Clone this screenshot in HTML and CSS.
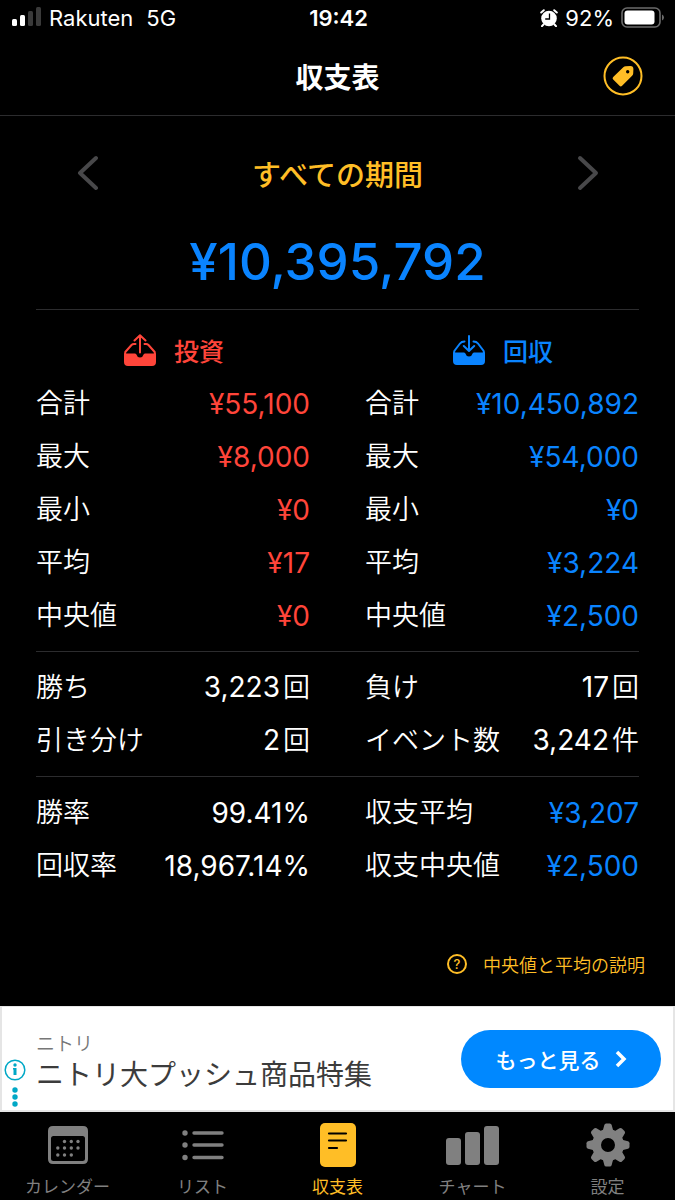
FILE: index.html
```html
<!DOCTYPE html>
<html lang="ja">
<head>
    <meta charset="UTF-8">
    <meta name="viewport" content="width=device-width, initial-scale=1.0">
    <title>収支表</title>
    <link rel="stylesheet" href="styles.css">
</head>
<body>
    <div class="status-bar">
        <div class="status-left">
            <svg class="signal" width="30" height="20" viewBox="0 0 30 20" aria-hidden="true">
                <rect x="0" y="12" width="5" height="7" rx="1.5" fill="#fff"/>
                <rect x="8" y="8" width="5" height="11" rx="1.5" fill="#fff"/>
                <rect x="16" y="4" width="5" height="15" rx="1.5" fill="#3a3a3a"/>
                <rect x="24" y="0" width="5" height="19" rx="1.5" fill="#3a3a3a"/>
            </svg>
            <span class="carrier">Rakuten</span>
            <span>5G</span>
        </div>
        <span class="clock">19:42</span>
        <div class="status-right">
            <svg width="18" height="18" viewBox="0 0 18 18" aria-hidden="true">
                <circle cx="9" cy="9.5" r="7.8" fill="#fff"/>
                <path d="M1.200 3.500 3.800 1.200M16.800 3.500l-2.600-2.300M3.500 15.500 2 17.200M14.500 15.500l1.500 1.700" stroke="#fff" stroke-width="2" stroke-linecap="round"/>
                <path d="M9.500 4.500v5.500H5.200" fill="none" stroke="#000" stroke-width="1.300"/>
            </svg>
            <span>92%</span>
            <svg class="battery" width="44" height="22" viewBox="0 0 44 22" aria-hidden="true">
                <rect x="1" y="1" width="38" height="19" rx="5" fill="none" stroke="#6b6b6b" stroke-width="1.600"/>
                <rect x="3.500" y="3.500" width="30" height="14" rx="3" fill="#fff"/>
                <path d="M41 7.500q2 .8 2 3t-2 3z" fill="#6b6b6b"/>
            </svg>
        </div>
    </div>

    <header class="nav-bar">
        <h1>収支表</h1>
        <button class="tag-button" type="button" aria-label="タグ">
            <svg width="40" height="40" viewBox="0 0 40 40">
                <circle cx="20" cy="20" r="18.500" fill="none" stroke="#ffbe26" stroke-width="2"/>
                <path fill="#ffbe26" fill-rule="evenodd" d="M20.300 11.300q1-1 2.400-1.100l4.800-.2q2.900 0 2.900 2.900l-.2 4.500q-.1 1.400-1.100 2.400l-10 10q-1.300 1.300-2.600 0l-6.300-6.300q-1.300-1.300 0-2.600zM24.700 14a1.700 1.700 0 1 0 0 3.400 1.700 1.700 0 0 0 0-3.400z"/>
            </svg>
        </button>
    </header>

    <main>
        <div class="period">
            <button class="arrow" type="button" aria-label="前の期間">
                <svg width="22" height="36" viewBox="0 0 22 36"><path d="M20 3 4 18l16 15"/></svg>
            </button>
            <h2>すべての期間</h2>
            <button class="arrow" type="button" aria-label="次の期間">
                <svg width="22" height="36" viewBox="0 0 22 36"><path d="M3 3l16 15L3 33"/></svg>
            </button>
        </div>

        <p class="total">¥10,395,792</p>

        <section class="group first">
            <div class="column">
                <h3 class="red">
                    <svg width="32" height="32" viewBox="0 0 32 32" aria-hidden="true">
                        <path fill="currentColor" d="M0 19.500h11q1.300 0 1.700 1.500a3.400 3.400 0 0 0 6.600 0q.4-1.500 1.700-1.500h11V28q0 4-4 4H4q-4 0-4-4z"/>
                        <path fill="none" stroke="currentColor" stroke-width="2" stroke-linecap="round" stroke-linejoin="round" d="M1 20.500 1.300 18 7.500 11q1-1 2.500-1h1.500M31 20.500l-.3-2.500-6.200-7q-1-1-2.500-1h-1.500M16 18.500V2M10.500 6.500 16 1.300l5.500 5.200"/>
                    </svg>
                    投資
                </h3>
                <table>
                    <tr><th scope="row">合計</th><td class="red">¥55,100</td></tr>
                    <tr><th scope="row">最大</th><td class="red">¥8,000</td></tr>
                    <tr><th scope="row">最小</th><td class="red">¥0</td></tr>
                    <tr><th scope="row">平均</th><td class="red">¥17</td></tr>
                    <tr><th scope="row">中央値</th><td class="red">¥0</td></tr>
                </table>
            </div>
            <div class="column">
                <h3 class="blue">
                    <svg width="32" height="32" viewBox="0 0 32 32" aria-hidden="true">
                        <path fill="currentColor" d="M0 18.500h11q1.300 0 1.700 1.500a3.400 3.400 0 0 0 6.600 0q.4-1.500 1.700-1.500h11V27q0 4-4 4H4q-4 0-4-4z"/>
                        <path fill="none" stroke="currentColor" stroke-width="2" stroke-linecap="round" stroke-linejoin="round" d="M1 19.500 1.300 17 7 9.500q1.500-2 4.500-2M31 19.500l-.3-2.500L25 9.500q-1.500-2-4.500-2M16 2v14M10.800 12l5.200 5 5.200-5"/>
                    </svg>
                    回収
                </h3>
                <table>
                    <tr><th scope="row">合計</th><td class="blue">¥10,450,892</td></tr>
                    <tr><th scope="row">最大</th><td class="blue">¥54,000</td></tr>
                    <tr><th scope="row">最小</th><td class="blue">¥0</td></tr>
                    <tr><th scope="row">平均</th><td class="blue">¥3,224</td></tr>
                    <tr><th scope="row">中央値</th><td class="blue">¥2,500</td></tr>
                </table>
            </div>
        </section>

        <section class="group">
            <table>
                <tr><th scope="row">勝ち</th><td>3,223<span class="unit">回</span></td></tr>
                <tr><th scope="row">引き分け</th><td>2<span class="unit">回</span></td></tr>
            </table>
            <table>
                <tr><th scope="row">負け</th><td>17<span class="unit">回</span></td></tr>
                <tr><th scope="row">イベント数</th><td>3,242<span class="unit">件</span></td></tr>
            </table>
        </section>

        <section class="group">
            <table>
                <tr><th scope="row">勝率</th><td>99.41%</td></tr>
                <tr><th scope="row">回収率</th><td>18,967.14%</td></tr>
            </table>
            <table>
                <tr><th scope="row">収支平均</th><td class="blue">¥3,207</td></tr>
                <tr><th scope="row">収支中央値</th><td class="blue">¥2,500</td></tr>
            </table>
        </section>

        <a class="help" href="#">
            <span class="help-icon">?</span>
            中央値と平均の説明
        </a>
    </main>

    <aside class="ad">
        <div class="ad-mark">
            <svg width="22" height="50" viewBox="0 0 22 50" aria-hidden="true">
                <circle cx="11" cy="12" r="9.800" fill="none" stroke="#00a8c6" stroke-width="1.500"/>
                <circle cx="11" cy="7" r="1.700" fill="#00a8c6"/>
                <path d="M9 10h3.500v7H9.500v-5.500H9z" fill="#00a8c6"/>
                <circle cx="11" cy="32" r="2.700" fill="#00a8c6"/>
                <circle cx="11" cy="39" r="2.700" fill="#00a8c6"/>
                <circle cx="11" cy="46" r="2.700" fill="#00a8c6"/>
            </svg>
        </div>
        <div class="ad-text">
            <p class="ad-brand">ニトリ</p>
            <p class="ad-title">ニトリ大プッシュ商品特集</p>
        </div>
        <a class="ad-link" href="#">
            もっと見る
            <svg width="12" height="18" viewBox="0 0 12 18" aria-hidden="true"><path d="M2 2l7 7-7 7" fill="none" stroke="#fff" stroke-width="3.500"/></svg>
        </a>
    </aside>

    <nav class="tab-bar">
        <a href="#">
            <svg width="44" height="44" viewBox="0 0 44 44" aria-hidden="true">
                <path fill="currentColor" fill-rule="evenodd" d="M7 3h30q5 0 5 5v28q0 5-5 5H7q-5 0-5-5V8q0-5 5-5zM7.500 13Q5 13 5 15.500v20Q5 38 7.500 38h29q2.500 0 2.500-2.500v-20q0-2.500-2.500-2.500z"/>
                <g fill="currentColor">
                    <circle cx="18.500" cy="18.500" r="1.700"/><circle cx="25.300" cy="18.500" r="1.700"/><circle cx="32" cy="18.500" r="1.700"/>
                    <circle cx="11.800" cy="25" r="1.700"/><circle cx="18.500" cy="25" r="1.700"/><circle cx="25.300" cy="25" r="1.700"/><circle cx="32" cy="25" r="1.700"/>
                    <circle cx="11.800" cy="32" r="1.700"/><circle cx="18.500" cy="32" r="1.700"/><circle cx="25.300" cy="32" r="1.700"/>
                </g>
            </svg>
            カレンダー
        </a>
        <a href="#">
            <svg width="44" height="44" viewBox="0 0 44 44" aria-hidden="true">
                <g fill="currentColor"><circle cx="4" cy="10" r="2.700"/><circle cx="4" cy="22" r="2.700"/><circle cx="4" cy="34.500" r="2.700"/></g>
                <path d="M13 10h28M13 22h28M13 34.500h28" stroke="currentColor" stroke-width="3.400" stroke-linecap="round"/>
            </svg>
            リスト
        </a>
        <a class="active" href="#">
            <svg width="44" height="44" viewBox="0 0 44 44" aria-hidden="true">
                <rect x="4" y="0" width="36" height="44" rx="5" fill="currentColor"/>
                <path d="M13 10.500h17M13 17.500h17M13 25h8" stroke="#000" stroke-width="2.200" stroke-linecap="round"/>
            </svg>
            収支表
        </a>
        <a href="#">
            <svg width="54" height="44" viewBox="0 0 54 44" aria-hidden="true">
                <g fill="currentColor"><rect x="0" y="15" width="15" height="27" rx="3"/><rect x="19" y="9" width="15" height="33" rx="3"/><rect x="38" y="3" width="15" height="39" rx="3"/></g>
            </svg>
            チャート
        </a>
        <a href="#">
            <svg width="44" height="44" viewBox="0 0 44 44" aria-hidden="true">
                <g fill="currentColor">
                    <path id="tooth" d="M16.500 9 18.300 2Q18.700.500 20.200.500h3.600Q25.300.500 25.700 2l1.800 7z"/>
                    <use href="#tooth" transform="rotate(45 22 22)"/>
                    <use href="#tooth" transform="rotate(90 22 22)"/>
                    <use href="#tooth" transform="rotate(135 22 22)"/>
                    <use href="#tooth" transform="rotate(180 22 22)"/>
                    <use href="#tooth" transform="rotate(225 22 22)"/>
                    <use href="#tooth" transform="rotate(270 22 22)"/>
                    <use href="#tooth" transform="rotate(315 22 22)"/>
                </g>
                <circle cx="22" cy="22" r="11.500" fill="none" stroke="currentColor" stroke-width="9"/>
            </svg>
            設定
        </a>
    </nav>
</body>
</html>
```
FILE: styles.css
```css
* {
    margin: 0;
    padding: 0;
    box-sizing: border-box;
}

body {
    display: flex;
    flex-direction: column;
    min-height: 100vh;
    background-color: #000;
    color: #fff;
    font-family: Inter, 'Noto Sans CJK JP', sans-serif;
}

a {
    text-decoration: none;
}

button {
    background: none;
    border: none;
    cursor: pointer;
}

svg {
    display: block;
    flex-shrink: 0;
}

.red {
    color: #ff453a;
}

.blue {
    color: #0a84ff;
}

/* Phone status bar */
.status-bar {
    display: grid;
    grid-template-columns: 1fr auto 1fr;
    align-items: center;
    height: 36px;
    padding: 0 10px 0 12px;
    font-size: 22px;
}

.status-left,
.status-right {
    display: flex;
    align-items: center;
    gap: 7px;
}

.signal {
    margin-bottom: 2px;
}

.carrier {
    margin-right: 6px;
}

.status-right {
    justify-content: flex-end;
}

.clock {
    font-weight: 600;
}

/* Title bar */
.nav-bar {
    display: grid;
    grid-template-columns: 1fr auto 1fr;
    align-items: center;
    height: 80px;
    padding: 0 32px;
    border-bottom: 1px solid #2c2c2e;
}

.nav-bar h1 {
    grid-column: 2;
    font-size: 28px;
    font-weight: 700;
}

.tag-button {
    justify-self: end;
}

main {
    flex: 1;
    padding: 0 36px;
}

.period {
    display: flex;
    justify-content: space-between;
    align-items: center;
    height: 114px;
    padding: 0 40px;
}

.period h2 {
    color: #ffbe26;
    font-size: 29px;
    font-weight: 500;
}

.arrow path {
    fill: none;
    stroke: #48484a;
    stroke-width: 4;
    stroke-linecap: round;
    stroke-linejoin: round;
}

.total {
    height: 79px;
    color: #0a84ff;
    font-size: 51px;
    font-weight: 500;
    line-height: 64px;
    text-align: center;
}

/* Two column figures */
.group {
    display: grid;
    grid-template-columns: 1fr 1fr;
    gap: 55px;
    padding: 9px 0;
    border-top: 1px solid #2c2c2e;
}

.group.first {
    padding-top: 15px;
}

.group h3 {
    display: flex;
    justify-content: center;
    align-items: center;
    gap: 18px;
    height: 52px;
    padding: 0 0 2px 2px;
    font-size: 25px;
    font-weight: 500;
}

.group table {
    width: 100%;
    border-collapse: collapse;
    font-size: 28px;
    white-space: nowrap;
}

.group tr {
    height: 53px;
    line-height: 40px;
}

.group th {
    font-size: 27px;
    font-weight: 350;
    text-align: left;
}

.group td {
    text-align: right;
}

.unit {
    margin-left: 3px;
    font-size: 27px;
    font-weight: 350;
}

.help {
    display: flex;
    justify-content: flex-end;
    align-items: center;
    gap: 16px;
    margin: 50px -6px 0 0;
    color: #ffbe26;
    font-size: 18px;
    font-weight: 350;
}

.help-icon {
    width: 20px;
    height: 20px;
    border: 2px solid #ffbe26;
    border-radius: 50%;
    font-size: 13px;
    font-weight: 500;
    line-height: 16px;
    text-align: center;
}

/* Ad banner */
.ad {
    display: flex;
    align-items: center;
    height: 106px;
    padding-right: 12px;
    background-color: #fff;
    border: 2px solid #e5e5e5;
    border-top-width: 1px;
}

.ad-mark {
    align-self: flex-end;
    width: 34px;
    padding: 0 0 2px 2px;
}

.ad-text {
    flex: 1;
    padding-top: 8px;
}

.ad-brand {
    color: #777;
    font-size: 19px;
    font-weight: 350;
    line-height: 24px;
}

.ad-title {
    color: #3c3c3c;
    font-size: 28px;
    line-height: 36px;
}

.ad-link {
    display: flex;
    justify-content: center;
    align-items: center;
    gap: 14px;
    width: 200px;
    height: 58px;
    background-color: #0088ff;
    border-radius: 29px;
    color: #fff;
    font-size: 21px;
    font-weight: 500;
}

/* Bottom tabs */
.tab-bar {
    display: grid;
    grid-template-columns: repeat(5, 1fr);
    height: 88px;
    padding-top: 11px;
}

.tab-bar a {
    display: flex;
    flex-direction: column;
    align-items: center;
    gap: 8px;
    color: #808080;
    font-size: 17px;
    line-height: 24px;
}

.tab-bar .active {
    color: #ffbe26;
}
```
